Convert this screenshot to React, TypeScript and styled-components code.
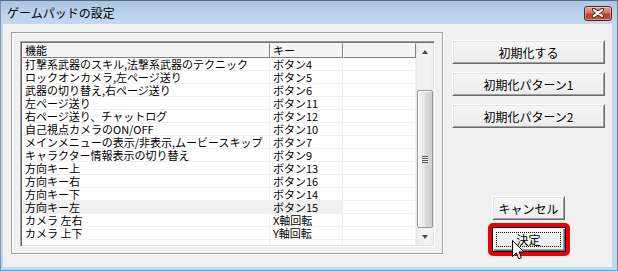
import styled, { createGlobalStyle } from "styled-components";

const GlobalStyle = createGlobalStyle`
  html, body {
    margin: 0;
    padding: 0;
    background: #f0f0f0;
  }
  body {
    font-family: "Noto Sans CJK JP", "Noto Sans", sans-serif;
  }
`;

const FONT = `"Noto Sans CJK JP", "Noto Sans", sans-serif`;

const ROWS: [string, string][] = [
  ["打撃系武器のスキル,法撃系武器のテクニック", "ボタン4"],
  ["ロックオンカメラ,左ページ送り", "ボタン5"],
  ["武器の切り替え,右ページ送り", "ボタン6"],
  ["左ページ送り", "ボタン11"],
  ["右ページ送り、チャットログ", "ボタン12"],
  ["自己視点カメラのON/OFF", "ボタン10"],
  ["メインメニューの表示/非表示,ムービースキップ", "ボタン7"],
  ["キャラクター情報表示の切り替え", "ボタン9"],
  ["方向キー上", "ボタン13"],
  ["方向キー右", "ボタン16"],
  ["方向キー下", "ボタン14"],
  ["方向キー左", "ボタン15"],
  ["カメラ 左右", "X軸回転"],
  ["カメラ 上下", "Y軸回転"],
];

const Window = styled.div`
  width: 618px;
  height: 271px;
  box-sizing: border-box;
  display: flex;
  flex-direction: column;
  background: #c3d7ee;
  border-top: 1px solid #56687d;
  border-left: 1px solid #7d91a8;
  border-right: 1px solid #6c7f93;
  border-bottom: 1px solid #4fa9dc;
`;

const TitleBar = styled.div`
  height: 23px;
  flex: none;
  display: flex;
  align-items: center;
  justify-content: space-between;
  padding: 0 5px 0 6px;
  background: linear-gradient(to bottom, #aac4e2, #bcd3ec 60%, #c5d9ef);
`;

const Title = styled.div`
  font: 12px ${FONT};
  color: #000;
  line-height: 14px;
`;

const CloseButton = styled.div`
  width: 28px;
  height: 15px;
  margin-top: 1px;
  box-sizing: border-box;
  border: 1px solid #5b2420;
  border-radius: 3px;
  background: linear-gradient(to bottom, #e3a597, #d27563 45%, #b8402c 55%, #c4563f);
  box-shadow: inset 0 0 0 1px rgba(255, 255, 255, 0.35);
  display: flex;
  align-items: center;
  justify-content: center;
`;

const FrameBody = styled.div`
  flex: 1;
  display: flex;
  padding: 0 5px 3px 2px;
`;

const Client = styled.div`
  flex: 1;
  display: flex;
  gap: 9px;
  box-sizing: border-box;
  padding: 8px 7px 11px 8px;
  background: #f0f0f0;
`;

const GroupFrame = styled.div`
  width: 432px;
  height: 222px;
  flex: none;
  box-sizing: border-box;
  padding: 8px;
  border: 1px solid #a0a0a0;
  box-shadow: inset 1px 1px 0 #fff, 1px 1px 0 #fff;
`;

const ListBox = styled.div`
  width: 415px;
  height: 206px;
  box-sizing: border-box;
  display: flex;
  background: #fff;
  border: 1px solid;
  border-color: #a0a0a0 #fff #fff #a0a0a0;
  box-shadow: inset 1px 1px 0 #696969, inset -1px -1px 0 #e3e3e3;
  padding: 1px;
`;

const Table = styled.div`
  flex: 1;
  display: flex;
  flex-direction: column;
  overflow: hidden;
`;

const Grid = styled.div<{ $head?: boolean }>`
  display: grid;
  grid-template-columns: 248px 73px 1fr;
  height: ${(p) => (p.$head ? 15 : 13)}px;
  flex: none;
`;

const HeadCell = styled.div`
  box-sizing: border-box;
  background: #f4f4f4;
  border-top: 1px solid #fff;
  border-left: 1px solid #fff;
  border-right: 1px solid #808080;
  border-bottom: 1px solid #808080;
  box-shadow: 0 1px 0 #696969;
  font: 11px ${FONT};
  line-height: 12px;
  padding-left: 2px;
  color: #000;
  white-space: nowrap;
`;

const Cell = styled.div<{ $hl?: boolean }>`
  box-sizing: border-box;
  background: ${(p) => (p.$hl ? "#f0f0f0" : "#fff")};
  box-shadow: inset -1px -1px 0 #f0f0f0;
  font: 11px ${FONT};
  line-height: 12px;
  padding-left: 3px;
  color: #000;
  white-space: nowrap;
`;

const ScrollBar = styled.div`
  width: 17px;
  flex: none;
  display: flex;
  flex-direction: column;
  background: linear-gradient(to right, #e2e2e2, #eeeeee 1px, #f4f4f4 60%, #efefef);
`;

const ScrollArrowButton = styled.div`
  height: 17px;
  flex: none;
  display: flex;
  align-items: center;
  justify-content: center;
`;

const Arrow = styled.span<{ $dir: "up" | "down" }>`
  width: 0;
  height: 0;
  border-left: 3.5px solid transparent;
  border-right: 3.5px solid transparent;
  ${(p) => (p.$dir === "up" ? "border-bottom: 4px solid #4a4a4a;" : "border-top: 4px solid #4a4a4a;")}
`;

const Track = styled.div`
  flex: 1;
  display: flex;
  flex-direction: column;
  justify-content: flex-end;
  padding: 0 0 0 1px;
`;

const Thumb = styled.div`
  height: 138px;
  box-sizing: border-box;
  border: 1px solid #979797;
  border-radius: 2px;
  background: linear-gradient(to right, #f3f3f3, #e9e9e9 45%, #d9d9d9 55%, #d0d0d0);
  box-shadow: inset 1px 1px 0 #fff;
  display: flex;
  align-items: center;
  justify-content: center;
`;

const Grip = styled.div`
  width: 6px;
  height: 7px;
  background: repeating-linear-gradient(to bottom, #4f4f4f 0 1px, #f5f5f5 1px 2px);
`;

const ButtonColumn = styled.div`
  flex: 1;
  display: flex;
  flex-direction: column;
  gap: 8px;
  padding-top: 8px;
`;

const BottomGroup = styled.div`
  margin-top: auto;
  display: flex;
  flex-direction: column;
  align-items: center;
  gap: 3px;
`;

const Button = styled.button<{ $w?: number; $isDefault?: boolean }>`
  position: relative;
  width: ${(p) => (p.$w ? `${p.$w}px` : "100%")};
  height: ${(p) => (p.$isDefault ? 25 : 24)}px;
  box-sizing: border-box;
  margin: 0;
  padding: 0;
  font: 12px ${FONT};
  color: #000;
  background: linear-gradient(to bottom, #f6f6f6, #ececec);
  border: 1px solid;
  border-color: ${(p) => (p.$isDefault ? "#000" : "#fff #696969 #696969 #fff")};
  box-shadow: ${(p) =>
    p.$isDefault
      ? "inset 1px 1px 0 #fff, inset -1px -1px 0 #696969, inset -2px -2px 0 #a0a0a0"
      : "inset 1px 1px 0 #e3e3e3, inset -1px -1px 0 #a0a0a0"};

  ${(p) =>
    p.$isDefault &&
    `&::after {
      content: "";
      position: absolute;
      left: 3px;
      right: 4px;
      top: 4px;
      bottom: 4px;
      border: 1px dotted #000;
    }`}
`;

const Highlight = styled.div`
  position: relative;
  border: 4px solid #e8000a;
  border-radius: 5px;
  display: flex;
`;

const Cursor = styled.svg`
  position: absolute;
  left: 20px;
  top: 13px;
  pointer-events: none;
`;

export default function App() {
  return (
    <>
      <GlobalStyle />
      <Window>
        <TitleBar>
          <Title>ゲームパッドの設定</Title>
          <CloseButton>
            <svg width="12" height="10" viewBox="0 0 12 10">
              <path
                d="M1.5 1.5 L10.5 8.5 M10.5 1.5 L1.5 8.5"
                stroke="#4a2a26"
                strokeWidth="4"
                strokeLinecap="round"
              />
              <path
                d="M1.8 1.8 L10.2 8.2 M10.2 1.8 L1.8 8.2"
                stroke="#fff"
                strokeWidth="2.2"
                strokeLinecap="round"
              />
            </svg>
          </CloseButton>
        </TitleBar>
        <FrameBody>
          <Client>
            <GroupFrame>
              <ListBox>
                <Table>
                  <Grid $head>
                    <HeadCell>機能</HeadCell>
                    <HeadCell>キー</HeadCell>
                    <HeadCell />
                  </Grid>
                  {ROWS.map(([name, key], i) => (
                    <Grid key={name}>
                      <Cell $hl={i === 11}>{name}</Cell>
                      <Cell $hl={i === 11}>{key}</Cell>
                      <Cell />
                    </Grid>
                  ))}
                  <Grid>
                    <Cell />
                    <Cell />
                    <Cell />
                  </Grid>
                </Table>
                <ScrollBar>
                  <ScrollArrowButton>
                    <Arrow $dir="up" />
                  </ScrollArrowButton>
                  <Track>
                    <Thumb>
                      <Grip />
                    </Thumb>
                  </Track>
                  <ScrollArrowButton>
                    <Arrow $dir="down" />
                  </ScrollArrowButton>
                </ScrollBar>
              </ListBox>
            </GroupFrame>
            <ButtonColumn>
              <Button>初期化する</Button>
              <Button>初期化パターン1</Button>
              <Button>初期化パターン2</Button>
              <BottomGroup>
                <Button $w={73}>キャンセル</Button>
                <Highlight>
                  <Button $w={74} $isDefault>
                    決定
                  </Button>
                  <Cursor width="13" height="20" viewBox="0 0 13 20">
                    <path
                      d="M0.5 0.5 L0.5 16.5 L4.3 12.8 L6.8 18.8 L9.4 17.7 L7 11.9 L12 11.9 Z"
                      fill="#fff"
                      stroke="#000"
                      strokeWidth="1"
                      strokeLinejoin="miter"
                    />
                  </Cursor>
                </Highlight>
              </BottomGroup>
            </ButtonColumn>
          </Client>
        </FrameBody>
      </Window>
    </>
  );
}
